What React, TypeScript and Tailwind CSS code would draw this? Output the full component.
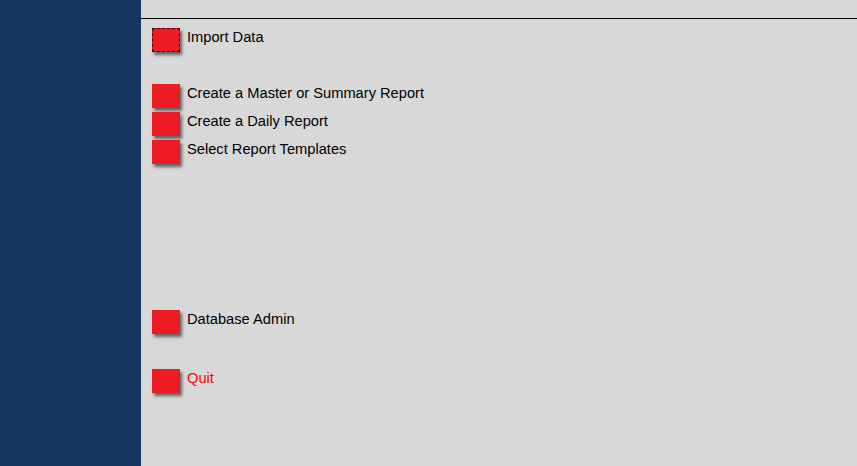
function MenuButton({ focused }: { focused?: boolean }) {
  return (
    <div
      className={`w-[28px] h-[24px] shrink-0 bg-[#ed1c24] shadow-[2px_3px_3px_rgba(0,0,0,0.55)] ${
        focused ? "border border-dashed border-[#3a0a0a]" : ""
      }`}
    />
  );
}

function MenuRow({
  label,
  focused,
  danger,
  className = "",
}: {
  label: string;
  focused?: boolean;
  danger?: boolean;
  className?: string;
}) {
  return (
    <div className={`flex items-start h-[24px] ${className}`}>
      <MenuButton focused={focused} />
      <span
        className={`ml-[7px] mt-[1px] text-[14.67px] leading-[17px] whitespace-nowrap ${
          danger ? "text-[#ff0000]" : "text-black"
        }`}
      >
        {label}
      </span>
    </div>
  );
}

function App() {
  return (
    <div
      className="flex w-[857px] h-[466px] overflow-hidden bg-[#d8d8d8]"
      style={{ fontFamily: '"Liberation Sans", Arial, sans-serif' }}
    >
      {/* Barra lateral */}
      <div className="w-[141px] h-full bg-[#17365d] shrink-0"></div>

      {/* Área do menu */}
      <div className="flex-1 flex flex-col">
        <div className="h-[18px]"></div>
        <div className="h-px bg-black"></div>

        <div className="flex flex-col pl-[11px] pt-[9px]">
          <MenuRow label="Import Data" focused />

          <div className="flex flex-col gap-[4px] mt-[32px]">
            <MenuRow label="Create a Master or Summary Report" />
            <MenuRow label="Create a Daily Report" />
            <MenuRow label="Select Report Templates" />
          </div>

          <MenuRow label="Database Admin" className="mt-[146px]" />
          <MenuRow label="Quit" danger className="mt-[35px]" />
        </div>
      </div>
    </div>
  );
}

export default App;
